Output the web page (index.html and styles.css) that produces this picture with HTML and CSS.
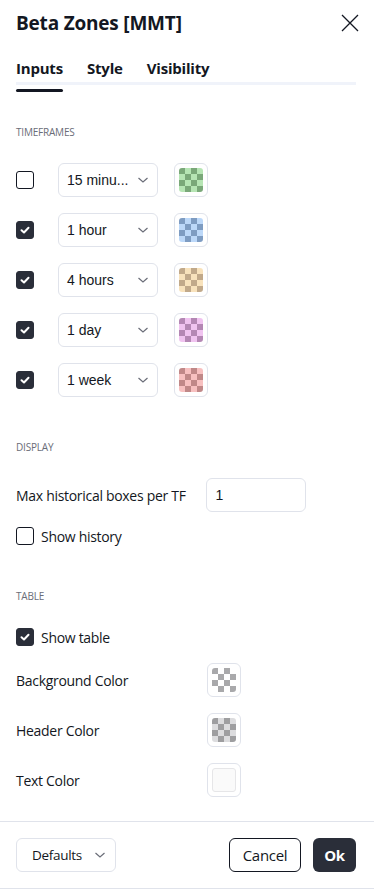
FILE: index.html
```html
<!DOCTYPE html>
<html>
<head>
<meta charset="utf-8">
<link rel="stylesheet" href="styles.css">
</head>
<body>
<div class="dialog">
  <div class="header">
    <div class="title">Beta Zones [MMT]</div>
    <button class="close" aria-label="Close">
      <svg width="18" height="18" viewBox="0 0 18 18"><path d="M1 1 L17 17 M17 1 L1 17" stroke="#131722" stroke-width="1.3" fill="none"/></svg>
    </button>
  </div>
  <div class="tabs">
    <div class="tab active">Inputs</div>
    <div class="tab">Style</div>
    <div class="tab">Visibility</div>
  </div>
  <div class="content">
    <div class="section-title first">TIMEFRAMES</div>
    <div class="tf-list">
      <div class="tf-row">
        <span class="cb"></span>
        <div class="select"><span class="sel-text">15 minu...</span><svg class="chev" width="12" height="8" viewBox="0 0 12 8"><path d="M1.5 2 L6 6 L10.5 2" stroke="#6a6d78" stroke-width="1.2" fill="none"/></svg></div>
        <div class="swatch"><div class="checks green"></div></div>
      </div>
      <div class="tf-row">
        <span class="cb on"><svg width="12" height="12" viewBox="0 0 12 12"><path d="M2.5 6.2 L5 8.5 L9.5 3.8" stroke="#fff" stroke-width="2" fill="none" stroke-linecap="round" stroke-linejoin="round"/></svg></span>
        <div class="select"><span class="sel-text">1 hour</span><svg class="chev" width="12" height="8" viewBox="0 0 12 8"><path d="M1.5 2 L6 6 L10.5 2" stroke="#6a6d78" stroke-width="1.2" fill="none"/></svg></div>
        <div class="swatch"><div class="checks blue"></div></div>
      </div>
      <div class="tf-row">
        <span class="cb on"><svg width="12" height="12" viewBox="0 0 12 12"><path d="M2.5 6.2 L5 8.5 L9.5 3.8" stroke="#fff" stroke-width="2" fill="none" stroke-linecap="round" stroke-linejoin="round"/></svg></span>
        <div class="select"><span class="sel-text">4 hours</span><svg class="chev" width="12" height="8" viewBox="0 0 12 8"><path d="M1.5 2 L6 6 L10.5 2" stroke="#6a6d78" stroke-width="1.2" fill="none"/></svg></div>
        <div class="swatch"><div class="checks tan"></div></div>
      </div>
      <div class="tf-row">
        <span class="cb on"><svg width="12" height="12" viewBox="0 0 12 12"><path d="M2.5 6.2 L5 8.5 L9.5 3.8" stroke="#fff" stroke-width="2" fill="none" stroke-linecap="round" stroke-linejoin="round"/></svg></span>
        <div class="select"><span class="sel-text">1 day</span><svg class="chev" width="12" height="8" viewBox="0 0 12 8"><path d="M1.5 2 L6 6 L10.5 2" stroke="#6a6d78" stroke-width="1.2" fill="none"/></svg></div>
        <div class="swatch"><div class="checks purple"></div></div>
      </div>
      <div class="tf-row">
        <span class="cb on"><svg width="12" height="12" viewBox="0 0 12 12"><path d="M2.5 6.2 L5 8.5 L9.5 3.8" stroke="#fff" stroke-width="2" fill="none" stroke-linecap="round" stroke-linejoin="round"/></svg></span>
        <div class="select"><span class="sel-text">1 week</span><svg class="chev" width="12" height="8" viewBox="0 0 12 8"><path d="M1.5 2 L6 6 L10.5 2" stroke="#6a6d78" stroke-width="1.2" fill="none"/></svg></div>
        <div class="swatch"><div class="checks red"></div></div>
      </div>
    </div>

    <div class="section-title">DISPLAY</div>
    <div class="field-row">
      <span class="label">Max historical boxes per TF</span>
      <div class="input">1</div>
    </div>
    <div class="check-row">
      <span class="cb"></span>
      <span class="label">Show history</span>
    </div>

    <div class="section-title table-title">TABLE</div>
    <div class="check-row">
      <span class="cb on"><svg width="12" height="12" viewBox="0 0 12 12"><path d="M2.5 6.2 L5 8.5 L9.5 3.8" stroke="#fff" stroke-width="2" fill="none" stroke-linecap="round" stroke-linejoin="round"/></svg></span>
      <span class="label">Show table</span>
    </div>
    <div class="color-list">
      <div class="color-row">
        <span class="label">Background Color</span>
        <div class="swatch"><div class="checks bg"></div></div>
      </div>
      <div class="color-row">
        <span class="label">Header Color</span>
        <div class="swatch"><div class="checks hdr"></div></div>
      </div>
      <div class="color-row">
        <span class="label">Text Color</span>
        <div class="swatch"><div class="checks txt"></div></div>
      </div>
    </div>
  </div>
  <div class="footer">
    <div class="defaults">Defaults<svg class="chev" width="12" height="8" viewBox="0 0 12 8"><path d="M1.5 2 L6 6 L10.5 2" stroke="#6a6d78" stroke-width="1.2" fill="none"/></svg></div>
    <div class="actions">
      <button class="btn cancel">Cancel</button>
      <button class="btn ok">Ok</button>
    </div>
  </div>
</div>
</body>
</html>
```

FILE: styles.css
```css
* { box-sizing: border-box; }
html, body { margin: 0; padding: 0; background: #fff; }
body {
  font-family: "Liberation Sans", Arial, sans-serif;
  color: #131722;
  width: 374px;
  height: 889px;
  overflow: hidden;
}
.dialog {
  display: flex;
  flex-direction: column;
  height: 889px;
  border-bottom: 1px solid #e0e3eb;
}
.header {
  display: flex;
  align-items: center;
  justify-content: space-between;
  padding: 9px 15px 0 16px;
  height: 36px;
}
.title {
  font-family: "Open Sans", sans-serif;
  font-size: 19px;
  font-weight: 700;
  letter-spacing: -0.2px;
}
.close {
  border: 0;
  background: none;
  padding: 0;
  width: 18px;
  height: 18px;
  display: flex;
}
.tabs {
  display: flex;
  gap: 24px;
  margin: 22px 18px 0 16px;
  border-bottom: 3px solid #f0f3fa;
  height: 27px;
}
.tab {
  font-family: "Open Sans", sans-serif;
  font-size: 15px;
  font-weight: 700;
  letter-spacing: -0.2px;
  line-height: 20px;
  position: relative;
}
.tab.active::after {
  content: "";
  position: absolute;
  left: 0;
  right: 0;
  bottom: -10px;
  height: 3px;
  border-radius: 2px;
  background: #131722;
}
.content {
  flex: 1;
  padding: 0 16px;
}
.section-title {
  font-family: "Open Sans", sans-serif;
  font-size: 10px;
  color: #6a6d78;
  letter-spacing: -0.2px;
  margin-top: 43px;
  height: 14px;
  line-height: 14px;
}
.section-title.first { margin-top: 40px; }
.section-title.table-title { margin-top: 44px; }
.tf-list {
  display: flex;
  flex-direction: column;
  gap: 16px;
  margin-top: 24px;
  margin-bottom: 12px;
}
.tf-row {
  display: flex;
  align-items: center;
  height: 34px;
}
.cb {
  width: 18px;
  height: 18px;
  border: 1px solid #131722;
  border-radius: 3px;
  display: inline-flex;
  align-items: center;
  justify-content: center;
  flex: none;
}
.cb.on { background: #2a2e39; border-color: #2a2e39; }
.tf-row .cb { margin-right: 24px; }
.select {
  width: 100px;
  height: 34px;
  border: 1px solid #e0e3eb;
  border-radius: 6px;
  display: flex;
  align-items: center;
  justify-content: space-between;
  padding: 0 8px 0 8px;
  font-size: 14px;
  margin-right: 16px;
}
.chev { flex: none; }
.swatch {
  width: 34px;
  height: 34px;
  border: 1px solid #e0e3eb;
  border-radius: 6px;
  padding: 4px;
  flex: none;
}
.checks {
  width: 24px;
  height: 24px;
  border-radius: 3px;
  background-size: 12px 12px;
}
.checks.green { background-image: repeating-conic-gradient(#b6e5b4 0 25%, #7aa879 0 50%); }
.checks.blue { background-image: repeating-conic-gradient(#bcd8f9 0 25%, #7e9cc2 0 50%); }
.checks.tan { background-image: repeating-conic-gradient(#f8e2bc 0 25%, #c1a98a 0 50%); }
.checks.purple { background-image: repeating-conic-gradient(#f0c3f0 0 25%, #b487b4 0 50%); }
.checks.red { background-image: repeating-conic-gradient(#f7c0c0 0 25%, #c08888 0 50%); }
.checks.bg { background-image: repeating-conic-gradient(#ffffff 0 25%, #a9a9ab 0 50%); }
.checks.hdr { background-image: repeating-conic-gradient(#dcdcde 0 25%, #9e9ea0 0 50%); }
.checks.txt {
  background: #fafafa;
  border: 1px solid #e6e6e8;
}
.label {
  font-family: "Open Sans", sans-serif;
  font-size: 14px;
  letter-spacing: -0.3px;
}
.field-row {
  display: flex;
  align-items: center;
  gap: 20px;
  margin-top: 24px;
  height: 34px;
}
.input {
  width: 100px;
  height: 34px;
  border: 1px solid #e0e3eb;
  border-radius: 6px;
  display: flex;
  align-items: center;
  padding: 0 9px;
  font-size: 14px;
}
.check-row {
  display: flex;
  align-items: center;
  gap: 7px;
  height: 18px;
}
.field-row + .check-row { margin-top: 15px; }
.section-title + .check-row { margin-top: 25px; }
.color-list {
  display: flex;
  flex-direction: column;
  gap: 16px;
  margin-top: 17px;
}
.color-row {
  display: flex;
  align-items: center;
  justify-content: space-between;
  width: 225px;
  height: 34px;
}
.footer {
  border-top: 1px solid #e0e3eb;
  display: flex;
  align-items: center;
  justify-content: space-between;
  padding: 0 18px 0 16px;
  height: 67px;
}
.defaults {
  width: 100px;
  height: 34px;
  border: 1px solid #e0e3eb;
  border-radius: 6px;
  display: flex;
  align-items: center;
  justify-content: space-between;
  padding: 0 9px 0 15px;
  font-family: "Open Sans", sans-serif;
  font-size: 13.5px;
  letter-spacing: -0.3px;
}
.actions { display: flex; gap: 12px; }
.btn {
  height: 34px;
  border-radius: 6px;
  font-family: "Open Sans", sans-serif;
  font-size: 15px;
  letter-spacing: -0.3px;
  padding: 0;
  cursor: pointer;
}
.cancel {
  width: 72px;
  border: 1px solid #131722;
  background: #fff;
  color: #131722;
}
.ok {
  width: 43px;
  border: 0;
  background: #2a2e39;
  color: #fff;
  font-weight: 700;
}
```
